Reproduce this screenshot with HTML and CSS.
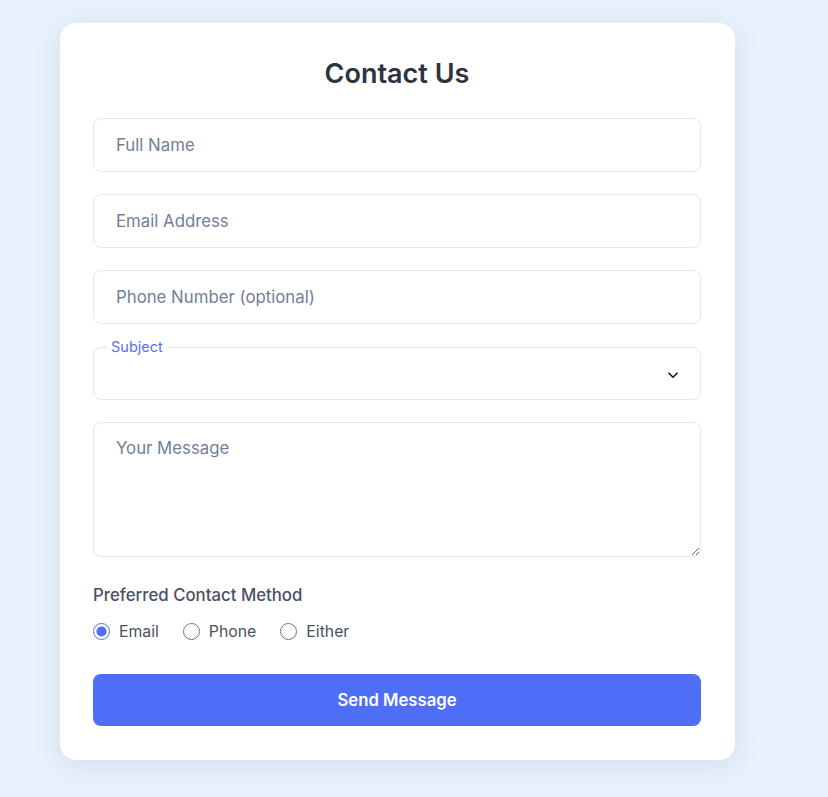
FILE: index.html
```html
<!DOCTYPE html>
<html lang="en">
<head>
  <meta charset="UTF-8" />
  <meta name="viewport" content="width=device-width, initial-scale=1.0"/>
  <title>Contact Us</title>
  <link rel="stylesheet" href="styles.css">
</head>
<body>

<div class="contact-card">
  <h1 class="title">Contact Us</h1>

  <form class="contact-form" onsubmit="return false">
    <input type="text" class="field" placeholder="Full Name">
    <input type="email" class="field" placeholder="Email Address">
    <input type="tel" class="field" placeholder="Phone Number (optional)">

    <fieldset class="select-box">
      <legend>Subject</legend>
      <select class="select">
        <option></option>
        <option>General Inquiry</option>
        <option>Support</option>
        <option>Feedback</option>
      </select>
      <svg class="chevron" width="12" height="8" viewBox="0 0 12 8">
        <path d="M1.5 1.8 L6 6.2 L10.5 1.8" fill="none" stroke="#111" stroke-width="1.6"/>
      </svg>
    </fieldset>

    <textarea class="field message" placeholder="Your Message"></textarea>

    <div class="method">
      <div class="method-label">Preferred Contact Method</div>
      <div class="radios">
        <label><input type="radio" name="method" checked> Email</label>
        <label><input type="radio" name="method"> Phone</label>
        <label><input type="radio" name="method"> Either</label>
      </div>
    </div>

    <button class="send">Send Message</button>
  </form>
</div>

</body>
</html>
```

FILE: styles.css
```css
* {
  box-sizing: border-box;
  font-family: Inter, "Noto Sans", sans-serif;
}

body {
  margin: 0;
  background: #e8f1fc;
  height: 100vh;
}

.contact-card {
  margin: 23px 0 0 60px;
  width: 675px;
  background: white;
  border-radius: 16px;
  padding: 35px 34px 34px 33px;
  box-shadow: 0 6px 24px rgba(120, 140, 180, 0.18);
}

.title {
  margin: 0 0 28px;
  text-align: center;
  font-size: 27px;
  line-height: 32px;
  font-weight: 600;
  color: #2d3340;
}

.contact-form {
  display: flex;
  flex-direction: column;
}

.field {
  height: 54px;
  margin-bottom: 22px;
  padding: 0 22px;
  border: 1px solid #e2e8f0;
  border-radius: 8px;
  font-size: 16.8px;
  color: #2d3748;
  outline: none;
  background: white;
}

.field::placeholder {
  color: #718096;
}

.message {
  height: 135px;
  padding: 15px 22px;
  resize: vertical;
  margin-bottom: 28px;
}

.select-box {
  position: relative;
  margin: -8px 0 22px;
  padding: 0;
  height: 62px;
  border: 1px solid #e2e8f0;
  border-radius: 8px;
}

.select-box legend {
  margin-left: 13px;
  padding: 0 4px;
  font-size: 14.5px;
  line-height: 18px;
  color: #5a6ff5;
}

.select {
  width: 100%;
  height: 44px;
  margin-top: -3px;
  border: none;
  outline: none;
  background: transparent;
  appearance: none;
  padding: 0 22px;
  font-size: 16px;
}

.chevron {
  position: absolute;
  right: 21px;
  top: 15px;
  pointer-events: none;
}

.method-label {
  font-size: 16.8px;
  font-weight: 500;
  color: #4a5160;
  margin-bottom: 17px;
}

.radios {
  display: flex;
  gap: 24px;
  margin-bottom: 33px;
}

.radios label {
  display: flex;
  align-items: center;
  gap: 9px;
  font-size: 15.8px;
  color: #4a5160;
}

.radios input {
  margin: 0;
  width: 17px;
  height: 17px;
  accent-color: #4f6ef7;
}

.send {
  height: 52px;
  border: none;
  border-radius: 8px;
  background: #4f6ef7;
  color: white;
  font-size: 16.7px;
  font-weight: 600;
  cursor: pointer;
}
```
